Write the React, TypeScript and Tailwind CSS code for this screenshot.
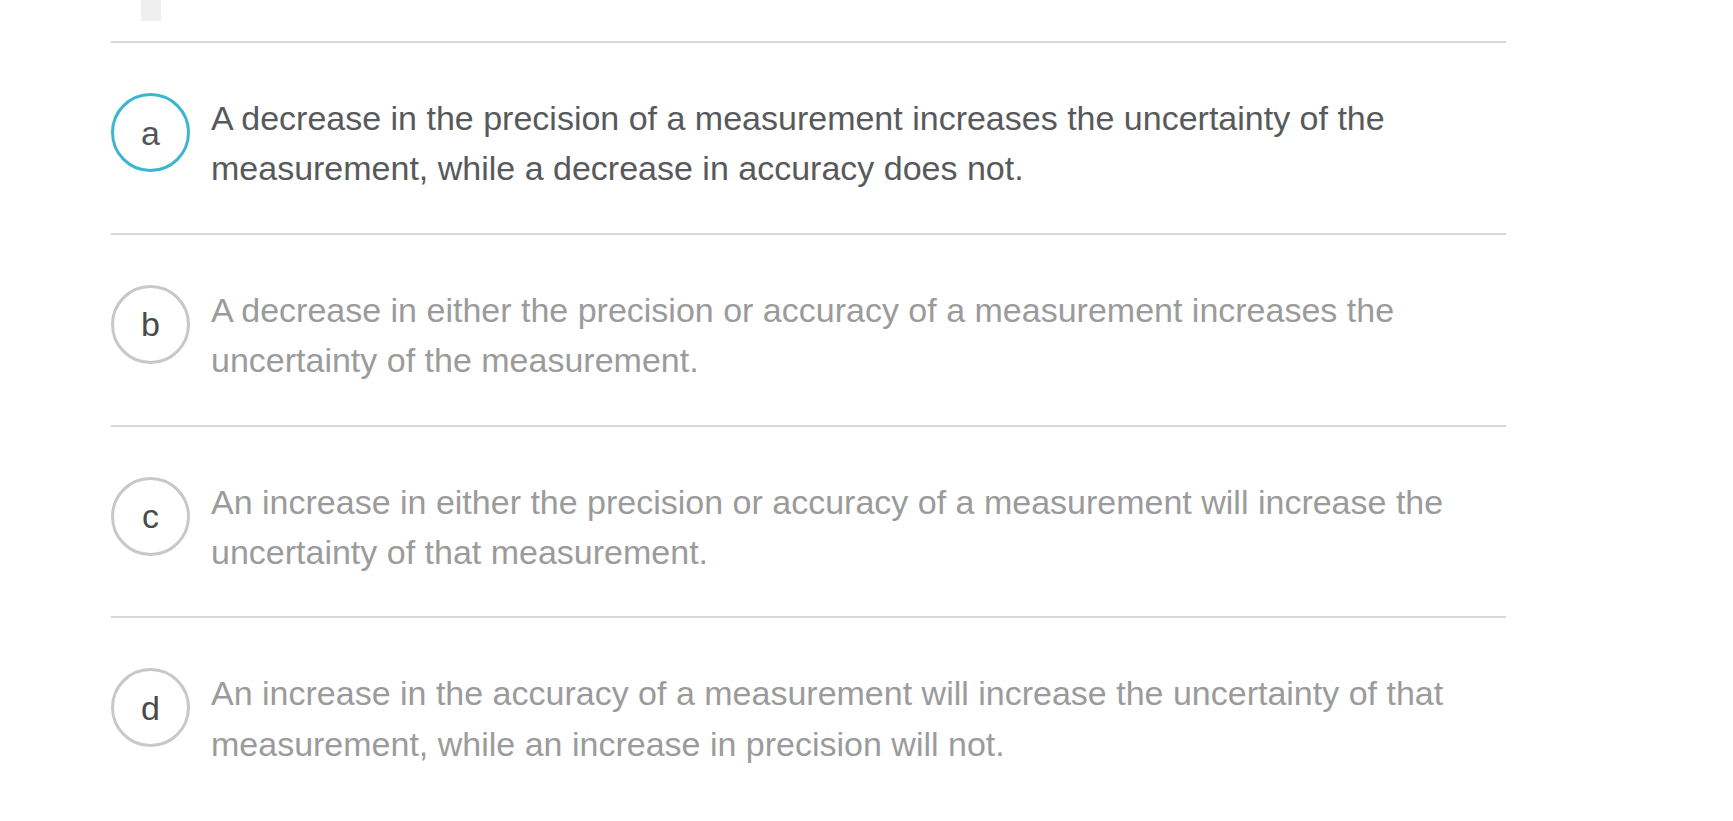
import React from 'react'

interface Choice {
  key: string
  text: string
}

const choices: Choice[] = [
  { key: 'a', text: 'A decrease in the precision of a measurement increases the uncertainty of the measurement, while a decrease in accuracy does not.' },
  { key: 'b', text: 'A decrease in either the precision or accuracy of a measurement increases the uncertainty of the measurement.' },
  { key: 'c', text: 'An increase in either the precision or accuracy of a measurement will increase the uncertainty of that measurement.' },
  { key: 'd', text: 'An increase in the accuracy of a measurement will increase the uncertainty of that measurement, while an increase in precision will not.' }
]

export default function App() {
  const selected = 'a'

  return (
    <div className="min-h-screen bg-white font-['Liberation_Sans',Arial,sans-serif]">
      <div className="ml-[111px] w-[1395px]">
        <div className="h-[41px]">
          <div className="ml-[30px] h-[21px] w-[20px] bg-[#efefef]" />
        </div>
        {choices.map((choice) => {
          const active = choice.key == selected
          return (
            <div key={choice.key} className="flex items-start border-t-2 border-[#d8d8d8] pt-[50px] pb-[39px]">
              <div
                className={`flex h-[79px] w-[79px] shrink-0 items-center justify-center rounded-full border-[3px] text-[34px] leading-none ${active ? 'border-[#3bb5d0] text-[#555557]' : 'border-[#c8c8c8] text-[#4a4a4a]'}`}
              >
                {choice.key}
              </div>
              <p className={`ml-[21px] text-[34px] leading-[50.4px] ${active ? 'text-[#58595b]' : 'text-[#9b9b9b]'}`}>
                {choice.text}
              </p>
            </div>
          )
        })}
      </div>
    </div>
  )
}
